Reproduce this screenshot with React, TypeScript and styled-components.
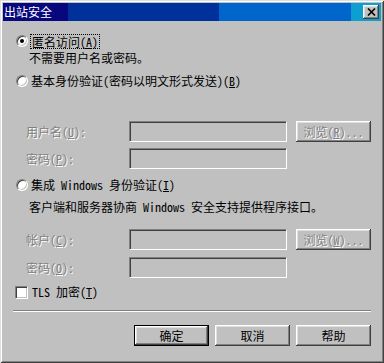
import React from "react";
import styled, { createGlobalStyle, css } from "styled-components";

const GlobalStyle = createGlobalStyle`
  html, body { margin: 0; padding: 0; background: #c0c0c0; }
  body {
    font-family: "Noto Sans Mono CJK SC", "Noto Sans CJK SC", "Liberation Mono", monospace;
    font-size: 12px;
    color: #000;
  }
`;

const Window = styled.div`
  width: 384px;
  height: 363px;
  box-sizing: border-box;
  background: #c0c0c0;
  display: flex;
  flex-direction: column;
  box-shadow: inset 1px 1px #dfdfdf, inset -1px -1px #404040,
    inset 2px 2px #ffffff, inset -2px -2px #808080;
`;

const TitleBar = styled.div`
  margin: 3px 3px 0 3px;
  height: 18px;
  display: flex;
  align-items: center;
  justify-content: space-between;
  padding: 0 2px 0 1px;
  background: linear-gradient(
    to right,
    #07077e 0px, #07077e 65px,
    #00309a 65px, #00309a 216px,
    #0066cc 216px, #0066cc 348px,
    #0d9fcf 348px, #0d9fcf 100%
  );
`;

const Title = styled.span`
  color: #fff;
  font-family: "Noto Sans CJK SC", sans-serif;
  font-size: 12px;
  line-height: 14px;
`;

const raised = css`
  background: #c0c0c0;
  box-shadow: inset -1px -1px #404040, inset 1px 1px #ffffff,
    inset -2px -2px #808080, inset 2px 2px #dfdfdf;
`;

const CloseButton = styled.div`
  width: 16px;
  height: 14px;
  ${raised};
  display: flex;
  align-items: center;
  justify-content: center;
`;

const Body = styled.div`
  display: flex;
  flex-direction: column;
  padding: 0 13px;
`;

const OptionRow = styled.div<{ $top: number; $left: number }>`
  display: flex;
  align-items: center;
  height: 14px;
  margin-top: ${(p) => p.$top}px;
  margin-left: ${(p) => p.$left}px;
  gap: 3px;
  line-height: 14px;
  white-space: nowrap;
`;

const Radio = styled.span<{ $checked?: boolean }>`
  width: 12px;
  height: 12px;
  box-sizing: border-box;
  border-radius: 50%;
  background: #fff;
  border: 1px solid;
  border-color: #808080 #ffffff #ffffff #808080;
  box-shadow: inset 1px 1px #404040, inset -1px -1px #c0c0c0;
  display: flex;
  align-items: center;
  justify-content: center;
  flex: none;
  &::after {
    content: "";
    width: 4px;
    height: 4px;
    border-radius: 50%;
    background: ${(p) => (p.$checked ? "#000" : "transparent")};
  }
`;

const Checkbox = styled.span`
  width: 13px;
  height: 13px;
  box-sizing: border-box;
  background: #fff;
  border: 1px solid;
  border-color: #808080 #ffffff #ffffff #808080;
  box-shadow: inset 1px 1px #404040, inset -1px -1px #c0c0c0;
  flex: none;
  margin-right: 1px;
`;

const FocusLabel = styled.span`
  outline: 1px dotted #000;
  outline-offset: 0px;
  padding: 0 1px;
  line-height: 13px;
`;

const Key = styled.span`
  text-decoration: underline;
`;

const Desc = styled.div<{ $top: number }>`
  margin-top: ${(p) => p.$top}px;
  margin-left: 16px;
  height: 14px;
  line-height: 14px;
  white-space: nowrap;
`;

const FieldRow = styled.div<{ $top: number }>`
  display: grid;
  grid-template-columns: 94px 158px 75px;
  column-gap: 9px;
  align-items: center;
  margin-left: 13px;
  margin-top: ${(p) => p.$top}px;
  height: 21px;
`;

const disabledText = css`
  color: #808080;
  text-shadow: 1px 1px 0 #ffffff;
`;

const FieldLabel = styled.span`
  ${disabledText};
  white-space: nowrap;
`;

const Input = styled.div`
  height: 21px;
  box-sizing: border-box;
  background: #c0c0c0;
  border: 1px solid;
  border-color: #808080 #ffffff #ffffff #808080;
  box-shadow: inset 1px 1px #404040, inset -1px -1px #c0c0c0;
`;

const Button = styled.div<{ $default?: boolean; $disabled?: boolean }>`
  width: 75px;
  height: 21px;
  box-sizing: border-box;
  ${raised};
  display: flex;
  align-items: center;
  justify-content: center;
  white-space: nowrap;
  font-family: "Noto Sans CJK SC", sans-serif;
  ${(p) =>
    p.$disabled &&
    css`
      font-family: "Noto Sans Mono CJK SC", "Noto Sans CJK SC", "Liberation Mono", monospace;
      ${disabledText};
    `}
  ${(p) =>
    p.$default &&
    css`
      border: 1px solid #000;
    `}
`;

const Separator = styled.div`
  margin-top: 11px;
  height: 0;
  border-top: 1px solid #808080;
  border-bottom: 1px solid #ffffff;
`;

const ButtonBar = styled.div`
  display: flex;
  justify-content: flex-end;
  gap: 6px;
  margin-top: 13px;
`;

export default function App() {
  return (
    <>
      <GlobalStyle />
      <Window>
        <TitleBar>
          <Title>出站安全</Title>
          <CloseButton>
            <svg width="9" height="8" viewBox="0 0 9 8">
              <path d="M1 0.5 L8 7.5 M8 0.5 L1 7.5" stroke="#000" strokeWidth="1.6" />
            </svg>
          </CloseButton>
        </TitleBar>
        <Body>
          <OptionRow $top={13} $left={3}>
            <Radio $checked />
            <FocusLabel>
              匿名访问(<Key>A</Key>)
            </FocusLabel>
          </OptionRow>
          <Desc $top={3}>不需要用户名或密码。</Desc>
          <OptionRow $top={9} $left={3}>
            <Radio />
            <span>
              基本身份验证(密码以明文形式发送)(<Key>B</Key>)
            </span>
          </OptionRow>
          <FieldRow $top={33}>
            <FieldLabel>
              用户名(<Key>U</Key>):
            </FieldLabel>
            <Input />
            <Button $disabled>
              浏览(<Key>R</Key>)...
            </Button>
          </FieldRow>
          <FieldRow $top={6}>
            <FieldLabel>
              密码(<Key>P</Key>):
            </FieldLabel>
            <Input />
          </FieldRow>
          <OptionRow $top={9} $left={3}>
            <Radio />
            <span>
              集成 Windows 身份验证(<Key>I</Key>)
            </span>
          </OptionRow>
          <Desc $top={8}>客户端和服务器协商 Windows 安全支持提供程序接口。</Desc>
          <FieldRow $top={15}>
            <FieldLabel>
              帐户(<Key>C</Key>):
            </FieldLabel>
            <Input />
            <Button $disabled>
              浏览(<Key>W</Key>)...
            </Button>
          </FieldRow>
          <FieldRow $top={7}>
            <FieldLabel>
              密码(<Key>O</Key>):
            </FieldLabel>
            <Input />
          </FieldRow>
          <OptionRow $top={7} $left={2}>
            <Checkbox />
            <span>
              TLS 加密(<Key>T</Key>)
            </span>
          </OptionRow>
          <Separator />
          <ButtonBar>
            <Button $default>确定</Button>
            <Button>取消</Button>
            <Button>帮助</Button>
          </ButtonBar>
        </Body>
      </Window>
    </>
  );
}
